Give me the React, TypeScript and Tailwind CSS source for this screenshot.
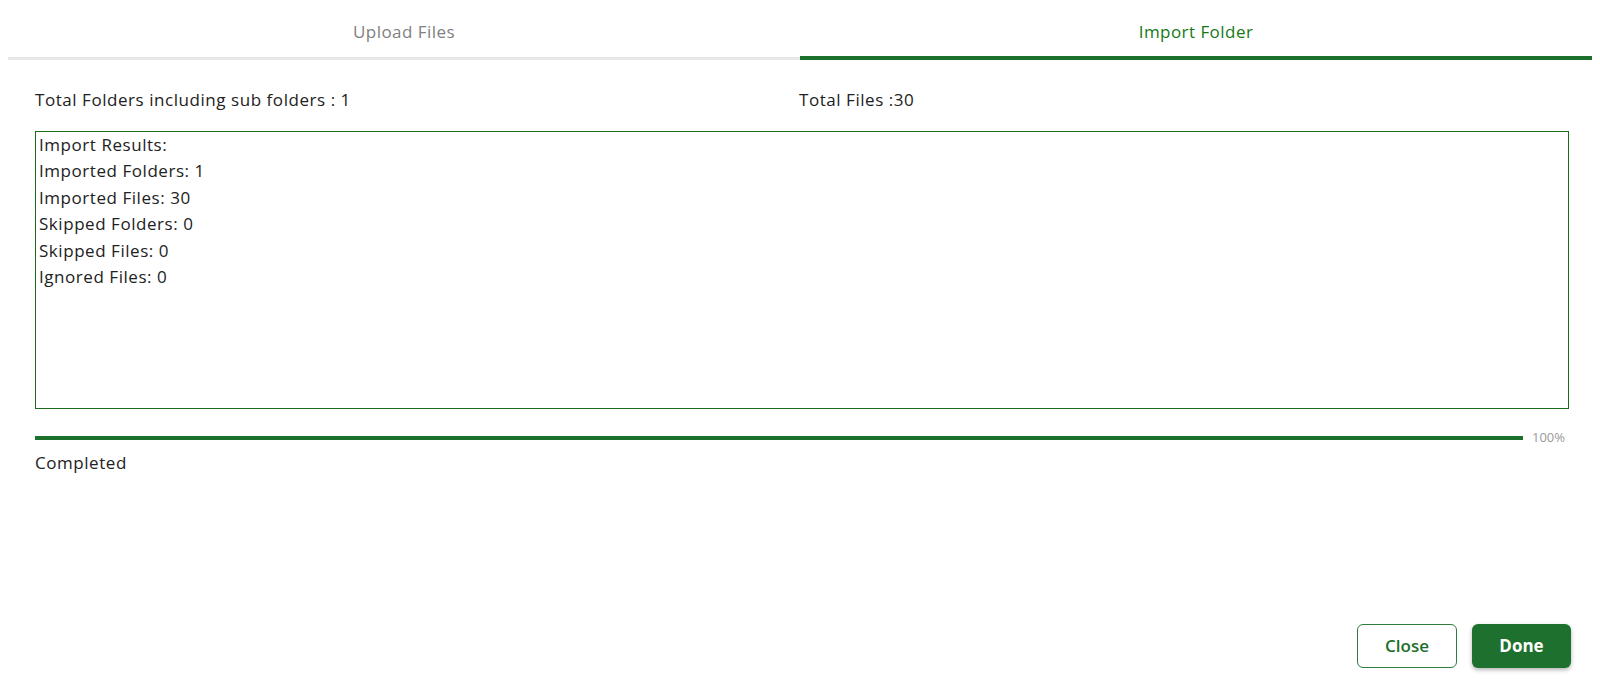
import { useState } from 'react';

type Tab = 'upload' | 'import';

const results = [
  'Import Results:',
  'Imported Folders: 1',
  'Imported Files: 30',
  'Skipped Folders: 0',
  'Skipped Files: 0',
  'Ignored Files: 0',
];

export default function App() {
  const [tab, setTab] = useState<Tab>('import');
  const progress = 100;

  return (
    <div
      className="h-[693px] w-full bg-white flex flex-col text-[#222] text-[17px] tracking-[0.55px]"
      style={{ fontFamily: '"Open Sans", Inter, sans-serif' }}
    >
      {/* tab strip */}
      <div className="flex mx-[8px] border-b-[3px] border-[#e8e8e8] h-[60px]">
        <button
          type="button"
          onClick={() => setTab('upload')}
          className={`flex-1 -mb-[3px] border-b-[4px] pt-[8px] tracking-[0.45px] ${
            tab === 'upload' ? 'border-[#1d6f2c] text-[#157a15] font-medium' : 'border-transparent text-[#808080]'
          }`}
        >
          Upload Files
        </button>
        <button
          type="button"
          onClick={() => setTab('import')}
          className={`flex-1 -mb-[3px] border-b-[4px] pt-[8px] tracking-[0.45px] ${
            tab === 'import' ? 'border-[#1d6f2c] text-[#157a15] font-medium' : 'border-transparent text-[#808080]'
          }`}
        >
          Import Folder
        </button>
      </div>

      <div className="px-[35px] pr-[31px] pt-[27px] flex flex-col">
        <div className="grid grid-cols-2 h-[24px] items-center">
          <span>Total Folders including sub folders : 1</span>
          <span className="-ml-[3px]">Total Files :30</span>
        </div>

        <div className="mt-[20px] h-[278px] border border-[#1a6b1a] pl-[3px] leading-[26.4px]">
          {results.map((line) => (
            <div key={line}>{line}</div>
          ))}
        </div>

        <div className="mt-[19px] flex items-center gap-[9px]">
          <div className="flex-1 h-[4px] bg-[#e5e5e5]">
            <div className="h-full bg-[#1d6f2c]" style={{ width: `${progress}%` }} />
          </div>
          <span className="text-[13px] tracking-normal text-[#9a9a9a] w-[37px]">{progress}%</span>
        </div>
        <div className="mt-[3px] h-[24px] flex items-center">Completed</div>
      </div>

      <div className="mt-auto flex justify-end gap-[15px] pr-[29px] pb-[25px] tracking-normal">
        <button
          type="button"
          className="w-[100px] h-[44px] rounded-[6px] border border-[#2e7d3e] text-[#1d6f2c] font-semibold"
        >
          Close
        </button>
        <button
          type="button"
          className="w-[99px] h-[44px] rounded-[6px] bg-[#1e702f] text-white font-bold shadow-[0_2px_4px_rgba(0,0,0,0.3)]"
        >
          Done
        </button>
      </div>
    </div>
  );
}
